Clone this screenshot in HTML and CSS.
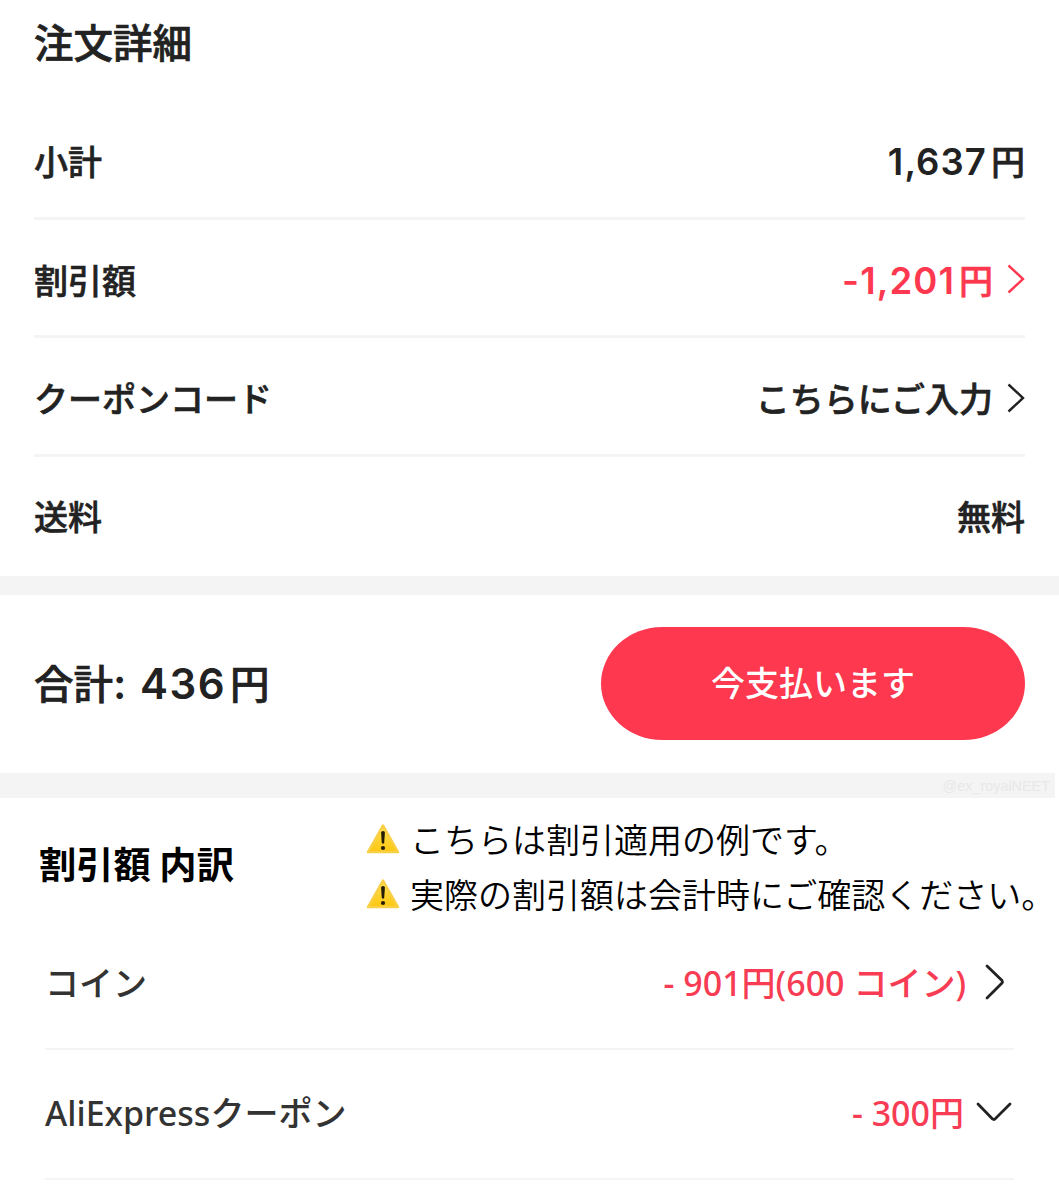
FILE: index.html
```
<!DOCTYPE html>
<html lang="ja">
<head>
  <meta charset="UTF-8">
  <title>注文詳細</title>
  <meta name="viewport" content="width=device-width, initial-scale=1.0">
  <link rel="stylesheet" href="styles.css">
</head>
<body>

  <section class="order">
    <h1>注文詳細</h1>
    <div class="row">
      <span>小計</span>
      <span class="value"><span class="num">1,637</span>円</span>
    </div>
    <div class="row">
      <span>割引額</span>
      <span class="value red"><span class="num">-1,201</span>円
        <svg class="arrow" viewBox="0 0 18 30"><path d="M1.5 1.5 L16 15 L1.5 28.5"/></svg>
      </span>
    </div>
    <div class="row">
      <span>クーポンコード</span>
      <span class="value">こちらにご入力
        <svg class="arrow" viewBox="0 0 18 30"><path d="M1.5 1.5 L16 15 L1.5 28.5"/></svg>
      </span>
    </div>
    <div class="row">
      <span>送料</span>
      <span class="value">無料</span>
    </div>
  </section>

  <section class="checkout">
    <div class="total"><span>合計</span><span class="num">: 436</span><span>円</span></div>
    <button class="pay">今支払います</button>
  </section>

  <div class="divider">@ex_royalNEET</div>

  <section class="breakdown">
    <div class="breakdown-head">
      <h2>割引額 内訳</h2>
      <div class="notes">
        <p>
          <svg class="warn" viewBox="0 0 34 32"><use href="#warning"/></svg>
          こちらは割引適用の例です。
        </p>
        <p>
          <svg class="warn" viewBox="0 0 34 32"><use href="#warning"/></svg>
          実際の割引額は会計時にご確認ください。
        </p>
      </div>
    </div>
    <div class="item">
      <span>コイン</span>
      <span class="price">- 901円(600 コイン)
        <svg class="right" viewBox="0 0 20 36"><path d="M2 2 L17 16.5 Q18 17.8 17 19 L2 34"/></svg>
      </span>
    </div>
    <div class="item">
      <span>AliExpressクーポン</span>
      <span class="price">- 300円
        <svg class="down" viewBox="0 0 36 20"><path d="M2 2 L16.5 17 Q17.8 18 19 17 L34 2"/></svg>
      </span>
    </div>
  </section>

  <svg class="defs">
    <defs>
      <linearGradient id="yellow" x1="0" y1="0" x2="0" y2="1">
        <stop offset="0" stop-color="#ffdf55"/>
        <stop offset="1" stop-color="#fcc70f"/>
      </linearGradient>
      <symbol id="warning" viewBox="0 0 34 32">
        <path d="M17 2.5 L32 29 H2 Z" fill="url(#yellow)" stroke="#f9cf45" stroke-width="2.5" stroke-linejoin="round"/>
        <path d="M15.1 9.5 Q15.1 8 17 8 T18.9 9.5 L18.2 20 Q17 21.6 15.8 20 Z" fill="#241d05"/>
        <circle cx="17" cy="25" r="2.1" fill="#241d05"/>
      </symbol>
    </defs>
  </svg>

</body>
</html>
```
FILE: styles.css
```
:root {
  --text: #222;
  --red: #fd384f;
  --line: #f4f4f4;
}

* {
  box-sizing: border-box;
}

body {
  margin: 0;
  background: #fff;
  color: var(--text);
  font-family: "Noto Sans CJK JP", sans-serif;
}

h1, h2, p {
  margin: 0;
}

svg {
  fill: none;
  flex-shrink: 0;
}

.order {
  height: 595px;
  padding: 0 34px;
  border-bottom: 19px solid var(--line);
}

h1 {
  height: 101px;
  line-height: 82px;
  font-size: 39.5px;
  font-weight: 500;
  -webkit-text-stroke: 0.7px;
}

.row {
  display: flex;
  justify-content: space-between;
  align-items: center;
  height: 118.6px;
  padding-top: 4px;
  font-size: 34px;
  font-weight: 500;
  -webkit-text-stroke: 0.6px;
  border-bottom: 3px solid var(--line);
}

.row:last-child {
  height: 117px;
  padding: 0;
  border-bottom: none;
}

.value {
  display: flex;
  align-items: center;
}

.num {
  padding-top: 3px;
  margin-right: 4px;
  font-family: Inter, sans-serif;
  font-size: 36.5px;
  font-weight: 600;
  letter-spacing: 1.1px;
  -webkit-text-stroke: 0;
}

.red {
  color: var(--red);
}

.arrow {
  width: 18px;
  height: 30px;
  margin-left: 14px;
  stroke: currentColor;
  stroke-width: 2.4;
}

.checkout {
  display: flex;
  justify-content: space-between;
  align-items: center;
  height: 178px;
  padding: 0 34px 2px;
}

.total {
  display: flex;
  align-items: center;
  padding-bottom: 3px;
  font-size: 39.5px;
  font-weight: 500;
  -webkit-text-stroke: 0.7px;
}

.total .num {
  font-size: 42px;
  letter-spacing: 1.5px;
}

.pay {
  width: 424px;
  height: 113px;
  padding: 0 0 3px;
  border: none;
  border-radius: 62px / 57px;
  background: var(--red);
  color: #fff;
  font-family: inherit;
  font-size: 34px;
  font-weight: 500;
}

.divider {
  width: 1055px;
  height: 25px;
  padding-right: 5px;
  background: var(--line);
  color: #e8e8e8;
  font-family: "Liberation Sans", sans-serif;
  font-size: 14.4px;
  line-height: 27px;
  text-align: right;
}

.breakdown-head {
  display: flex;
  height: 122px;
  color: #000;
}

h2 {
  flex-shrink: 0;
  width: 365px;
  padding-left: 39px;
  line-height: 131px;
  font-size: 37.3px;
  font-weight: 600;
}

.notes {
  padding-top: 13px;
}

.notes p {
  display: flex;
  align-items: center;
  height: 55px;
  font-size: 34px;
  font-weight: 350;
  white-space: nowrap;
}

.warn {
  width: 36px;
  height: 32px;
  margin-right: 9px;
}

.item {
  display: flex;
  justify-content: space-between;
  align-items: center;
  height: 130px;
  padding-bottom: 5px;
  margin: 0 45px;
  color: #333;
  font-family: "Noto Sans", "Noto Sans CJK JP", sans-serif;
  font-size: 34px;
  font-weight: 500;
  border-bottom: 2px solid var(--line);
}

.price {
  display: flex;
  align-items: center;
  color: #f73c54;
}

.right,
.down {
  stroke: #222;
  stroke-width: 2.8;
  stroke-linecap: round;
}

.right {
  width: 20px;
  height: 36px;
  margin: 0 9px 0 19px;
}

.down {
  width: 36px;
  height: 20px;
  margin: 0 2px 0 12px;
}

.defs {
  display: block;
  width: 0;
  height: 0;
}
```
